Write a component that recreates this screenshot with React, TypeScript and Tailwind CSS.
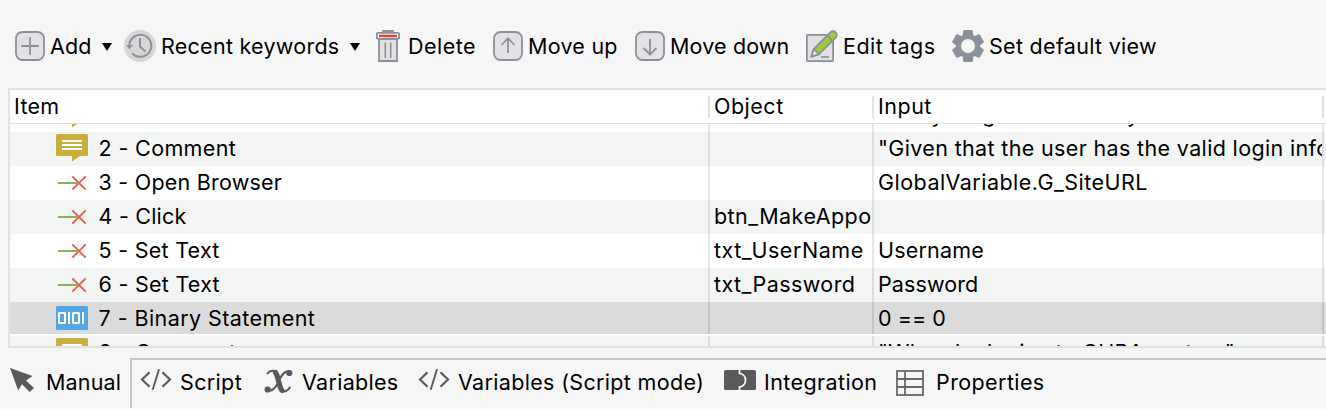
import type { ReactNode } from "react";

const STROKE = "#8b919b";
const FILL = "#e3e1e3";
const DARK = "#5a5a5a";

function BoxIcon({ children }: { children: ReactNode }) {
  return (
    <svg width="30" height="30" viewBox="0 0 30 30" fill="none" stroke={STROKE} strokeWidth="1.8" className="shrink-0">
      <rect x="1" y="1" width="28" height="28" rx="6.5" fill={FILL} />
      {children}
    </svg>
  );
}

const AddIcon = () => (
  <BoxIcon>
    <path d="M15 6.2v17.6M6.2 15h17.6" />
  </BoxIcon>
);

const UpIcon = () => (
  <BoxIcon>
    <path d="M15 22V7.5M8.5 14L15 7.2l6.500 6.800" />
  </BoxIcon>
);

const DownIcon = () => (
  <BoxIcon>
    <path d="M15 8v15.200M8.500 17L15 23.400 21.500 17" />
  </BoxIcon>
);

const HistoryIcon = () => (
  <svg width="32" height="32" viewBox="0 0 32 32" fill="none" stroke={STROKE} strokeWidth="2" className="shrink-0">
    <circle cx="16" cy="16" r="16" fill="#d7d7d7" stroke="none" />
    <path d="M5.300 16A11 11 0 1 1 8.200 23.200" />
    <path d="M2 15h7l-3.500 4.200z" fill={STROKE} stroke="none" />
    <path d="M16 8v8.500l5.500 5" />
  </svg>
);

const TrashIcon = () => (
  <svg width="24" height="32" viewBox="0 0 24 32" fill="none" stroke={STROKE} strokeWidth="1.800" className="shrink-0">
    <path d="M7 2.500V1h10v1.500" fill={STROKE} />
    <path d="M3 9h18v22H3z" fill={FILL} />
    <rect x="0.900" y="2.900" width="22.200" height="5.800" rx="1" fill="#fff" />
    <path d="M3 5.800h18" stroke="#ea3e2c" strokeWidth="2.300" />
    <path d="M9.300 12.500V28M14.700 12.500V28" strokeWidth="1.600" />
  </svg>
);

const EditIcon = () => (
  <svg width="32" height="32" viewBox="0 0 32 32" fill="none" stroke={STROKE} strokeWidth="1.800" className="shrink-0">
    <rect x="0.900" y="4.900" width="26.200" height="26.200" rx="1" fill={FILL} />
    <path d="M15 27h8" strokeWidth="1.600" />
    <path d="M5.300 26.700L7.800 19 24.300 2.300a3.700 3.700 0 0 1 5.300 5.300L13.200 24.200z" fill="#a2c83f" strokeLinejoin="round" />
    <path d="M5.300 26.700L8 19.300l5 4.900z" fill="#f1f1f1" strokeLinejoin="round" />
    <path d="M21.300 5.500l5.200 5.200" />
  </svg>
);

const GearIcon = () => (
  <svg width="32" height="32" viewBox="-16 -16 32 32" className="shrink-0">
    <g fill={STROKE}>
      {[0, 60, 120, 180, 240, 300].map((a) => (
        <path key={a} d="M-4-15.900h8q.6 0 .7.600l1 6.300h-11.400l1-6.300q.1-.600.700-.600z" transform={`rotate(${a})`} />
      ))}
      <circle r="12" />
    </g>
    <circle r="7" fill="#f6f6f6" />
  </svg>
);

const CommentIcon = () => (
  <svg width="32" height="30" viewBox="0 1 32 30" className="block">
    <path d="M1.500 1h29A1.500 1.500 0 0 1 32 2.500v19a1.500 1.500 0 0 1-1.500 1.500H24l-8 5.500V23H1.500A1.500 1.500 0 0 1 0 21.500v-19A1.500 1.500 0 0 1 1.500 1z" fill="#cbae3b" />
    <path d="M6 8h20M6 12h20M6 16h20" stroke="#fff" strokeWidth="2" />
  </svg>
);

const StepIcon = () => (
  <svg width="32" height="30" viewBox="0 0 32 30" fill="none" className="block">
    <path d="M2 15h19" stroke="#84b64e" strokeWidth="2" />
    <path d="M16.300 8.300l13.400 13.400M29.700 8.300L16.300 21.700" stroke="#e75d50" strokeWidth="1.900" />
  </svg>
);

const BinaryIcon = () => (
  <svg width="32" height="30" viewBox="0 0 32 30" fill="none" className="block">
    <rect y="2" width="32" height="24" rx="1.500" fill="#53a7e7" />
    <g stroke="#fff" strokeWidth="2">
      <rect x="3" y="9" width="6" height="10" rx="0.500" />
      <path d="M13 8v12M27 8v12" />
      <rect x="17" y="9" width="6" height="10" rx="0.500" />
    </g>
  </svg>
);

const CodeIcon = () => (
  <svg width="32" height="24" viewBox="0 0 32 24" fill="none" stroke={DARK} strokeWidth="2.200" className="shrink-0">
    <path d="M9.500 4.200L2 11.500l7.500 7.300M22.500 4.200l7.500 7.300-7.500 7.300" />
    <path d="M19 1.200l-6.300 20.600" strokeWidth="1.900" />
  </svg>
);

const CursorIcon = () => (
  <svg width="24" height="24" viewBox="0 0 24 24" fill={DARK} className="shrink-0">
    <path d="M0 0l22.500 8-6.500 4.500 8 7.500-4.300 4-7.700-7.800-3.800 6.300z" />
  </svg>
);

const VariableIcon = () => (
  <svg width="30" height="26" viewBox="0 0 30 26" fill="none" stroke={DARK} strokeLinecap="round" className="shrink-0">
    <path d="M11.500 4.500C14.500 8 14.500 18 18 22.500" strokeWidth="5.200" />
    <path d="M3.500 5.500C5.500 2.800 8.500 2.200 11.500 3M18 23.300c3.500.700 6-.800 7.800-3.800" strokeWidth="2" />
    <path d="M15.500 11C18.500 6.500 20.500 3 25 3.500M14.500 14.500C11 20 8.500 23.500 4 22.500" strokeWidth="2.200" />
    <circle cx="25.300" cy="5" r="3.100" fill={DARK} stroke="none" />
    <circle cx="3.600" cy="21.500" r="3.100" fill={DARK} stroke="none" />
  </svg>
);

const IntegrationIcon = () => (
  <svg width="32" height="20" viewBox="0 0 32 20" fill="none" className="shrink-0">
    <rect width="32" height="20" rx="1.500" fill={DARK} />
    <path d="M15.500 0v3.500c8 1 8 12.500 0 13.500v3" stroke="#fff" strokeWidth="1.700" />
  </svg>
);

const TableIcon = () => (
  <svg width="28" height="26" viewBox="0 0 28 26" fill="none" stroke="#686868" strokeWidth="1.800" className="shrink-0">
    <rect x="1" y="1" width="26" height="24" />
    <path d="M1 9h26M1 17h26M9 1v24" />
  </svg>
);

const Caret = ({ className }: { className: string }) => (
  <svg width="10" height="8" viewBox="0 0 10 8" className={`mt-0.5 shrink-0 ${className}`}>
    <path d="M0 0h10L5 8z" />
  </svg>
);

function Tool({ icon, label, className }: { icon: ReactNode; label: string; className: string }) {
  return (
    <button className={`flex shrink-0 items-center ${className}`}>
      {icon}
      <span>{label}</span>
    </button>
  );
}

type Row = {
  icon: ReactNode;
  item: string;
  itemClass?: string;
  object?: string;
  objectClass?: string;
  input?: string;
  inputClass?: string;
  bg: string;
};

const rows: Row[] = [
  { icon: <CommentIcon />, item: "1 - Comment", input: '"Story: Login to CURA system"', inputClass: "tracking-[0.3px]", bg: "bg-white" },
  { icon: <CommentIcon />, item: "2 - Comment", itemClass: "tracking-[0.35px]", input: '"Given that the user has the valid login information"', inputClass: "tracking-[0.35px]", bg: "bg-[#f4f5f5]" },
  { icon: <StepIcon />, item: "3 - Open Browser", itemClass: "tracking-[0.22px]", input: "GlobalVariable.G_SiteURL", inputClass: "tracking-[0.47px]", bg: "bg-white" },
  { icon: <StepIcon />, item: "4 - Click", itemClass: "tracking-[0.2px]", object: "btn_MakeAppointment", objectClass: "tracking-[0.45px]", bg: "bg-[#f4f5f5]" },
  { icon: <StepIcon />, item: "5 - Set Text", itemClass: "tracking-[0.26px]", object: "txt_UserName", objectClass: "tracking-[0.55px]", input: "Username", inputClass: "tracking-[0.2px]", bg: "bg-white" },
  { icon: <StepIcon />, item: "6 - Set Text", itemClass: "tracking-[0.26px]", object: "txt_Password", objectClass: "tracking-[0.43px]", input: "Password", inputClass: "tracking-[0.1px]", bg: "bg-[#f4f5f5]" },
  { icon: <BinaryIcon />, item: "7 - Binary Statement", itemClass: "tracking-[0.42px]", input: "0 == 0", inputClass: "tracking-[0.05px]", bg: "bg-[#dbdbdb] border-b-2 border-white" },
  { icon: <CommentIcon />, item: "8 - Comment", itemClass: "tracking-[0.35px]", input: '"When he logins to CURA system"', inputClass: "tracking-[0.28px]", bg: "bg-[#f4f5f5]" },
];

export default function App() {
  return (
    <div className="flex h-[410px] w-[1326px] flex-col overflow-hidden bg-[#f6f6f6] font-['Inter','Liberation_Sans',sans-serif] text-[21.5px] leading-[28px] text-black">
      <div className="flex h-[88px] shrink-0 items-center pt-1 pl-[15px] whitespace-nowrap">
        <Tool icon={<AddIcon />} label="Add" className="w-[87px] gap-[5px] tracking-[0.1px]" />
        <Caret className="mr-3" />
        <Tool icon={<HistoryIcon />} label="Recent keywords" className="w-[226px] gap-[5px] tracking-[0.26px]" />
        <Caret className="mr-4" />
        <Tool icon={<TrashIcon />} label="Delete" className="w-[117px] gap-2 tracking-[0.5px]" />
        <Tool icon={<UpIcon />} label="Move up" className="w-[142px] gap-[5px] tracking-[0.25px]" />
        <Tool icon={<DownIcon />} label="Move down" className="w-[171px] gap-[5px] tracking-[0.15px]" />
        <Tool icon={<EditIcon />} label="Edit tags" className="w-[146px] gap-[5px] tracking-[0.5px]" />
        <Tool icon={<GearIcon />} label="Set default view" className="gap-[5px] tracking-[0.3px]" />
      </div>

      <div className="ml-2 flex h-[260px] shrink-0 flex-col overflow-hidden border-y-2 border-l-2 border-[#e2e2e2] bg-white">
        <div className="flex h-[34px] shrink-0 items-center border-b border-[#e0e0e0]">
          <div className="flex h-[22px] w-[700px] items-center border-r-2 border-[#e2e2e2] pb-0.5 pl-1 leading-[20px] tracking-[0.3px]">Item</div>
          <div className="flex h-[22px] w-[164px] items-center border-r-2 border-[#e2e2e2] pb-0.5 pl-1 leading-[20px] tracking-[0.5px]">Object</div>
          <div className="flex h-[22px] w-[450px] items-center border-r-2 border-[#e2e2e2] pb-0.5 pl-1 leading-[20px] tracking-[0.5px]">Input</div>
        </div>
        <div className="min-h-0 flex-1 overflow-hidden">
          <div className="-mt-[26px] flex flex-col">
            {rows.map((r) => (
              <div key={r.item} className={`flex h-[34px] shrink-0 whitespace-nowrap ${r.bg}`}>
                <div className="flex w-[700px] border-r-2 border-black/10 pt-0.5 pl-[46px]">
                  <div className="w-[42.6px]">{r.icon}</div>
                  <span className={r.itemClass}>{r.item}</span>
                </div>
                <div className="w-[164px] overflow-hidden border-r-2 border-black/10 pt-0.5 pl-1">
                  <span className={r.objectClass}>{r.object}</span>
                </div>
                <div className="w-[450px] overflow-hidden border-r-2 border-black/10 pt-0.5 pl-1">
                  <span className={r.inputClass}>{r.input}</span>
                </div>
              </div>
            ))}
          </div>
        </div>
      </div>

      <div className="flex h-[60px] shrink-0 pt-2.5 whitespace-nowrap">
        <div className="flex w-[130px] items-start pl-2.5">
          <div className="pt-2.5"><CursorIcon /></div>
          <span className="pt-2.5 pl-3 tracking-[0.15px]">Manual</span>
        </div>
        <div className="flex flex-1 items-start border-t-2 border-l-2 border-[#c6c6c6] pl-2">
          <div className="flex w-[124px]">
            <div className="pt-2"><CodeIcon /></div>
            <span className="pt-2 pl-2 tracking-[0.35px]">Script</span>
          </div>
          <div className="flex w-[154px]">
            <div className="pt-2"><VariableIcon /></div>
            <span className="pt-2 pl-2 tracking-[0.3px]">Variables</span>
          </div>
          <div className="flex w-[306px]">
            <div className="pt-2"><CodeIcon /></div>
            <span className="pt-2 pl-2 tracking-[0.33px]">Variables (Script mode)</span>
          </div>
          <div className="flex w-[172px]">
            <div className="pt-2.5"><IntegrationIcon /></div>
            <span className="pt-2 pl-2 tracking-[0.4px]">Integration</span>
          </div>
          <div className="flex">
            <div className="pt-2.5"><TableIcon /></div>
            <span className="pt-2 pl-3 tracking-[0.4px]">Properties</span>
          </div>
        </div>
      </div>
      <div className="h-0.5 shrink-0 bg-[#fbfbfb]" />
    </div>
  );
}
